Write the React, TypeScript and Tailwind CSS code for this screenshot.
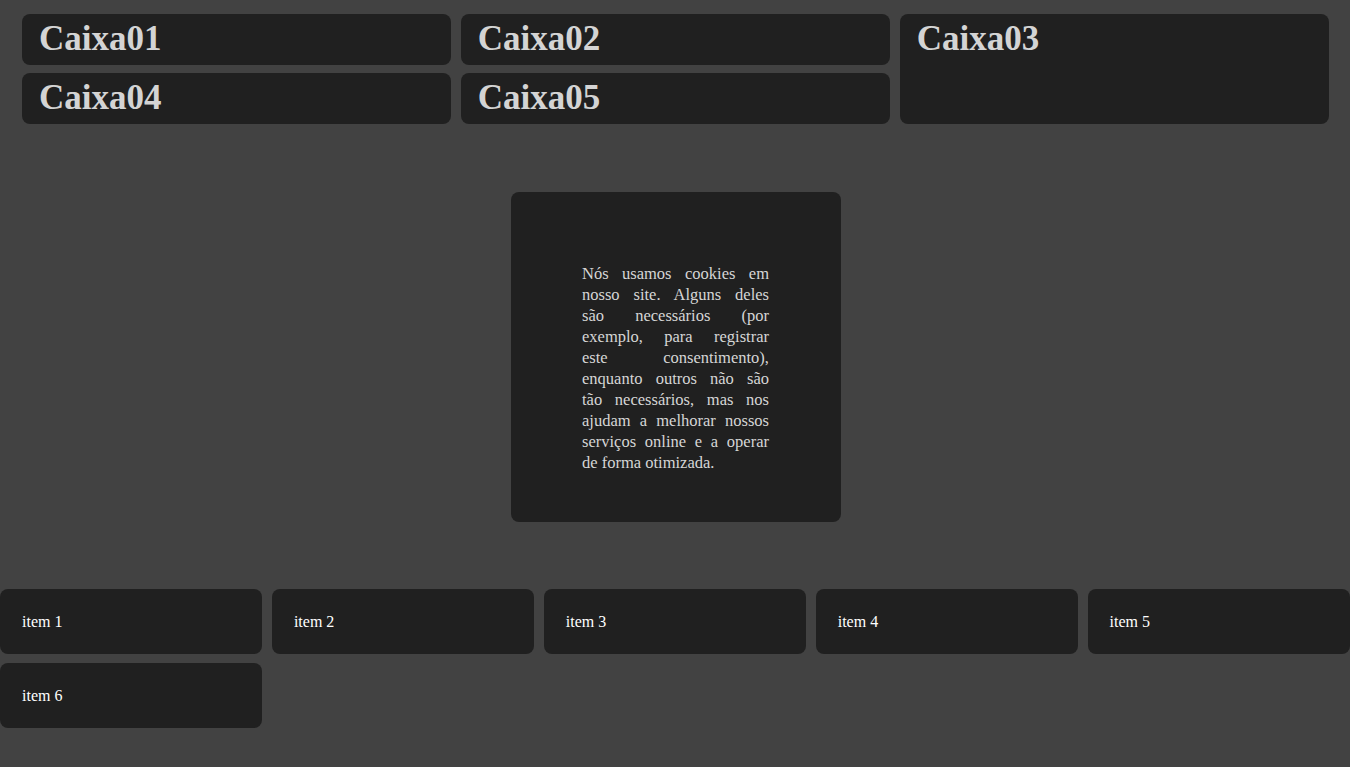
import React from 'react';

const caixas = [
  { label: 'Caixa01', span: '' },
  { label: 'Caixa02', span: '' },
  { label: 'Caixa03', span: 'row-span-2' },
  { label: 'Caixa04', span: '' },
  { label: 'Caixa05', span: '' },
];

// quebras de linha iguais à referência
const cookieLines = [
  'Nós usamos cookies em',
  'nosso site. Alguns deles',
  'são necessários (por',
  'exemplo, para registrar',
  'este consentimento),',
  'enquanto outros não são',
  'tão necessários, mas nos',
  'ajudam a melhorar nossos',
  'serviços online e a operar',
  'de forma otimizada.',
];

const items = ['item 1', 'item 2', 'item 3', 'item 4', 'item 5', 'item 6'];

export default function App() {
  return (
    <div className="min-h-screen bg-[#424242] pt-[14px] pb-10 font-['Liberation_Serif','Times_New_Roman',serif]">
      {/* Caixas */}
      <div className="grid grid-cols-3 grid-rows-[51px_51px] gap-x-[9.5px] gap-y-[8px] pl-[22px] pr-[21px]">
        {caixas.map((c) => (
          <div key={c.label} className={`rounded-lg bg-[#202020] px-[17px] pt-[7px] ${c.span}`}>
            <h1 className="text-[35px] font-bold leading-none text-[#d4d4d4]">{c.label}</h1>
          </div>
        ))}
      </div>

      {/* Cookies */}
      <div className="mt-[68px] ml-[calc(50%-164px)] h-[330px] w-[330px] rounded-lg bg-[#202020] py-[71px] pl-[71px] pr-[72px]">
        <p className="text-[16.5px] leading-[21px] text-[#d6d6d6]">
          {cookieLines.map((line, i) => (
            <span
              key={i}
              className={
                i < cookieLines.length - 1
                  ? 'block text-justify [text-align-last:justify]'
                  : 'block text-left'
              }
            >
              {line}
            </span>
          ))}
        </p>
      </div>

      {/* Items */}
      <div className="mt-[67px] grid grid-cols-5 gap-[9.5px]">
        {items.map((it) => (
          <div key={it} className="rounded-lg bg-[#202020] px-[22px] pt-[24px] pb-[22px] text-[16px] leading-[18.5px] text-white">
            {it}
          </div>
        ))}
      </div>
    </div>
  );
}
